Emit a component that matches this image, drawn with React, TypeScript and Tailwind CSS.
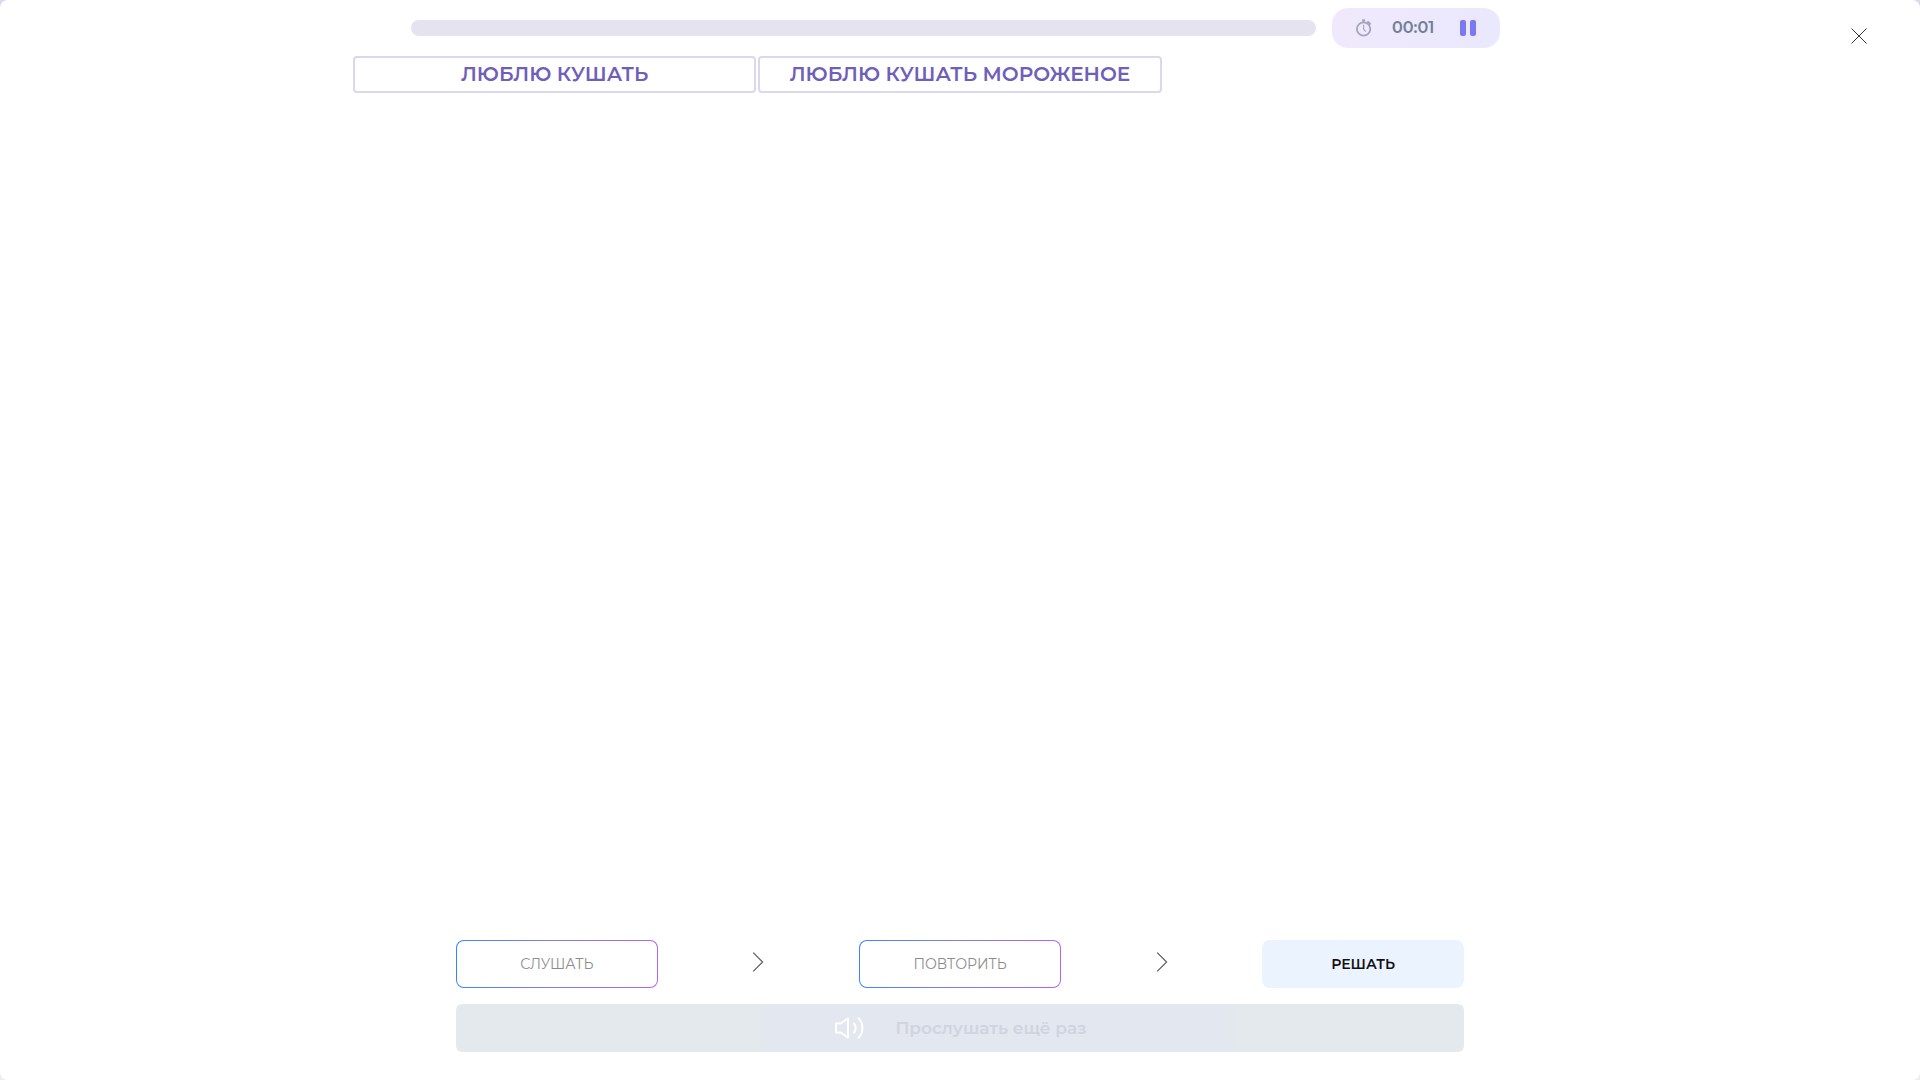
const phrases = ["ЛЮБЛЮ КУШАТЬ", "ЛЮБЛЮ КУШАТЬ МОРОЖЕНОЕ"];

function StopwatchIcon() {
  return (
    <svg className="h-[18px] w-4" viewBox="0 0 16 18" fill="none" stroke="#a9a3bd" aria-hidden="true">
      <circle cx="7.6" cy="10" r="6.7" strokeWidth="1.8" />
      <path d="M7.6 5.7v4.5l2.2 2.5" strokeWidth="1.1" />
      <path d="M6.1 1.2h3M7.6 1.2v2.5" strokeWidth="2" />
      <path d="M12 3.2l1.8 1.6" strokeWidth="2.4" strokeLinecap="round" />
    </svg>
  );
}

function SpeakerIcon() {
  return (
    <svg
      className="h-6 w-8"
      viewBox="0 0 32 24"
      fill="none"
      stroke="#ffffff"
      strokeWidth="2"
      strokeLinecap="round"
      strokeLinejoin="round"
      aria-hidden="true"
    >
      <path d="M3 7.5H7.5L15 2.5V21.5L7.5 16.5H3Z" />
      <path d="M21 7.5C23.1 10 23.1 14 21 16.5" />
      <path d="M25.5 2.3C30.7 7.3 30.7 16.7 25.5 21.7" />
    </svg>
  );
}

function Arrow() {
  return (
    <div className="flex justify-center pb-1">
      <svg className="h-5 w-3" viewBox="0 0 12 20" fill="none" stroke="#5c5c5c" strokeWidth="1.2" aria-hidden="true">
        <path d="M1.2 .6L10.6 10L1.2 19.4" />
      </svg>
    </div>
  );
}

function OutlineStep({ label }: { label: string }) {
  return (
    <button
      type="button"
      className="flex h-12 rounded-lg bg-linear-to-r from-[#3485ff] to-[#b266ee] p-px text-sm font-normal text-[#8c8c8c]"
    >
      <span className="flex h-full flex-1 items-center justify-center rounded-[7px] bg-white">{label}</span>
    </button>
  );
}

export default function App() {
  return (
    <div className="min-h-screen bg-linear-to-b from-[#dcdaea] to-[#eeeeee] font-['Montserrat','Inter',sans-serif]">
      <div className="flex min-h-screen flex-col rounded-lg bg-white pt-2 pb-7">
        <header className="relative">
          <div className="mx-auto flex w-full max-w-[1098px] items-center gap-4 pr-[9px]">
            <div
              role="progressbar"
              aria-label="Прогресс"
              aria-valuenow={0}
              className="h-4 flex-1 rounded-full bg-[#e5e3f0]"
            />
            <div className="flex h-10 w-[168px] items-center rounded-2xl bg-linear-to-r from-[#f0e9fc] to-[#eae8fd] px-6">
              <StopwatchIcon />
              <span className="ml-5 text-base font-semibold text-[#708096]">00:01</span>
              <button type="button" aria-label="Пауза" className="ml-auto flex gap-1">
                <span className="h-4 w-1.5 rounded-xs bg-[#7b78f0]" />
                <span className="h-4 w-1.5 rounded-xs bg-[#7b78f0]" />
              </button>
            </div>
          </div>
          <button type="button" aria-label="Закрыть" className="absolute top-5 right-[53px]">
            <svg className="size-4" viewBox="0 0 16 16" stroke="#000000" strokeWidth="0.8" aria-hidden="true">
              <path d="M.5 .5L15.5 15.5M15.5 .5L.5 15.5" />
            </svg>
          </button>
        </header>

        <main className="mx-auto mt-2 grid w-full max-w-[1214px] flex-1 grid-cols-3 content-start gap-0.5">
          {phrases.map((phrase) => (
            <button
              key={phrase}
              type="button"
              className="h-[37px] rounded-sm border-2 border-[#dbd7ee] pb-0.5 text-center text-xl font-semibold whitespace-nowrap text-[#705fba]"
            >
              {phrase}
            </button>
          ))}
        </main>

        <footer className="mx-auto flex w-full max-w-[1008px] flex-col gap-4">
          <nav aria-label="Этапы" className="grid grid-cols-5 items-center">
            <OutlineStep label="СЛУШАТЬ" />
            <Arrow />
            <OutlineStep label="ПОВТОРИТЬ" />
            <Arrow />
            <button type="button" aria-current="step" className="h-12 rounded-lg bg-[#ebf3ff] text-sm font-semibold text-[#111111]">
              РЕШАТЬ
            </button>
          </nav>
          <button
            type="button"
            className="flex h-12 items-center justify-center gap-[30px] rounded-md bg-[linear-gradient(90deg,#e4e9ed_30%,#e3e7ef_31%,#e3e7ef_76%,#e4e9ed_78%)] text-[17px] font-semibold text-[#d0d4e0]"
          >
            <SpeakerIcon />
            <span className="pt-px">Прослушать ещё раз</span>
          </button>
        </footer>
      </div>
    </div>
  );
}
